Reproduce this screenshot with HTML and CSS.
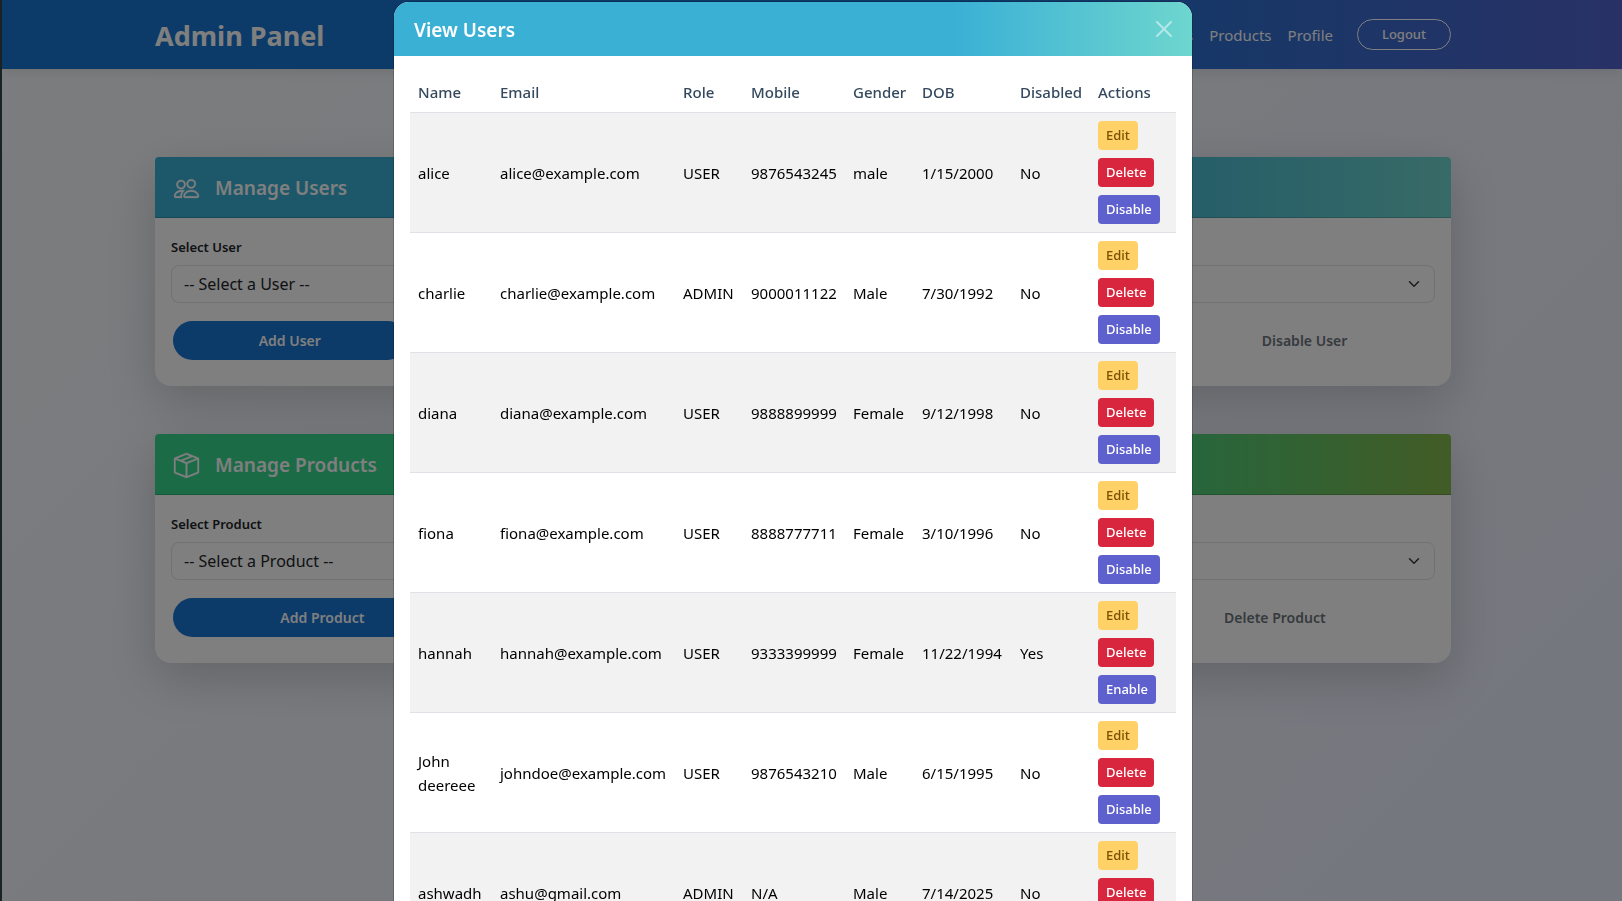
FILE: index.html
```html
<!DOCTYPE html>
<html lang="en">
<head>
<meta charset="utf-8">
<meta name="viewport" content="width=device-width, initial-scale=1">
<title>Admin Panel</title>
<link rel="stylesheet" href="styles.css">
</head>
<body>
<div class="app">
  <header class="navbar">
    <div class="container navbar-inner">
      <a class="brand" href="#">Admin Panel</a>
      <nav class="nav-links">
        <a href="#users">Users</a>
        <a href="#products">Products</a>
        <a href="#profile">Profile</a>
        <button class="logout" type="button">Logout</button>
      </nav>
    </div>
  </header>
  <main class="container content">
    <section class="card" id="users">
      <h2 class="card-head card-head-users">
        <svg class="card-icon" viewBox="0 0 16 16" aria-hidden="true"><path d="M15 14s1 0 1-1-1-4-5-4-5 3-5 4 1 1 1 1zm-7.978-1L7 12.996c.001-.264.167-1.03.76-1.72C8.312 10.629 9.282 10 11 10c1.717 0 2.687.63 3.24 1.276.593.69.758 1.457.76 1.72l-.008.002-.014.002zM11 7a2 2 0 1 0 0-4 2 2 0 0 0 0 4m3-2a3 3 0 1 1-6 0 3 3 0 0 1 6 0M6.936 9.28a6 6 0 0 0-1.23-.247A7 7 0 0 0 5 9c-4 0-5 3-5 4q0 1 1 1h4.216A2.24 2.24 0 0 1 5 13c0-1.01.377-2.042 1.09-2.904.243-.294.526-.569.846-.816M4.92 10A5.5 5.5 0 0 0 4 13H1c0-.26.164-1.03.76-1.724.545-.636 1.492-1.256 3.16-1.275ZM1.5 5.5a3 3 0 1 1 6 0 3 3 0 0 1-6 0m3-2a2 2 0 1 0 0 4 2 2 0 0 0 0-4"/></svg>
        Manage Users
      </h2>
      <div class="card-body">
        <label class="field-label" for="user-select">Select User</label>
        <div class="select-wrap">
          <select id="user-select"><option>-- Select a User --</option></select>
          <svg class="chevron" viewBox="0 0 16 16" aria-hidden="true"><path d="m2 5 6 6 6-6"/></svg>
        </div>
        <div class="pills">
          <button class="pill pill-active" type="button">Add User</button>
          <button class="pill" type="button">View Users</button>
          <button class="pill" type="button">Update User</button>
          <button class="pill" type="button">Delete User</button>
          <button class="pill" type="button">Disable User</button>
        </div>
      </div>
    </section>
    <section class="card" id="products">
      <h2 class="card-head card-head-products">
        <svg class="card-icon" viewBox="0 0 16 16" aria-hidden="true"><path d="M8.186 1.113a.5.5 0 0 0-.372 0L1.846 3.5l2.404.961L10.404 2zm3.564 1.426L5.596 5 8 5.961 14.154 3.5zm3.25 1.7-6.5 2.6v7.922l6.5-2.6V4.24zM7.5 14.762V6.838L1 4.239v7.923zM7.443.184a1.5 1.5 0 0 1 1.114 0l7.129 2.852A.5.5 0 0 1 16 3.5v8.662a1 1 0 0 1-.629.928l-7.185 2.874a.5.5 0 0 1-.372 0L.63 13.09a1 1 0 0 1-.63-.928V3.5a.5.5 0 0 1 .314-.464z"/></svg>
        Manage Products
      </h2>
      <div class="card-body">
        <label class="field-label" for="product-select">Select Product</label>
        <div class="select-wrap">
          <select id="product-select"><option>-- Select a Product --</option></select>
          <svg class="chevron" viewBox="0 0 16 16" aria-hidden="true"><path d="m2 5 6 6 6-6"/></svg>
        </div>
        <div class="pills">
          <button class="pill pill-active" type="button">Add Product</button>
          <button class="pill" type="button">View Products</button>
          <button class="pill" type="button">Update Product</button>
          <button class="pill" type="button">Delete Product</button>
        </div>
      </div>
    </section>
  </main>
</div>

<div class="backdrop">
  <div class="modal" role="dialog" aria-modal="true" aria-labelledby="modal-title">
    <div class="modal-head">
      <h1 class="modal-title" id="modal-title">View Users</h1>
      <button class="close" type="button" aria-label="Close">
        <svg viewBox="0 0 16 16" aria-hidden="true"><path d="M.293.293a1 1 0 0 1 1.414 0L8 6.586 14.293.293a1 1 0 1 1 1.414 1.414L9.414 8l6.293 6.293a1 1 0 0 1-1.414 1.414L8 9.414l-6.293 6.293a1 1 0 0 1-1.414-1.414L6.586 8 .293 1.707a1 1 0 0 1 0-1.414"/></svg>
      </button>
    </div>
    <div class="modal-body">
      <table class="users">
        <colgroup>
          <col class="c-name"><col class="c-email"><col class="c-role"><col class="c-mobile"><col class="c-gender"><col class="c-dob"><col class="c-disabled"><col class="c-actions">
        </colgroup>
        <thead>
          <tr><th>Name</th><th>Email</th><th>Role</th><th>Mobile</th><th>Gender</th><th>DOB</th><th>Disabled</th><th>Actions</th></tr>
        </thead>
        <tbody>
          <tr><td>alice</td><td>alice@example.com</td><td>USER</td><td>9876543245</td><td>male</td><td>1/15/2000</td><td>No</td>
            <td><div class="actions"><button class="btn edit" type="button">Edit</button><button class="btn delete" type="button">Delete</button><button class="btn toggle" type="button">Disable</button></div></td></tr>
          <tr><td>charlie</td><td>charlie@example.com</td><td>ADMIN</td><td>9000011122</td><td>Male</td><td>7/30/1992</td><td>No</td>
            <td><div class="actions"><button class="btn edit" type="button">Edit</button><button class="btn delete" type="button">Delete</button><button class="btn toggle" type="button">Disable</button></div></td></tr>
          <tr><td>diana</td><td>diana@example.com</td><td>USER</td><td>9888899999</td><td>Female</td><td>9/12/1998</td><td>No</td>
            <td><div class="actions"><button class="btn edit" type="button">Edit</button><button class="btn delete" type="button">Delete</button><button class="btn toggle" type="button">Disable</button></div></td></tr>
          <tr><td>fiona</td><td>fiona@example.com</td><td>USER</td><td>8888777711</td><td>Female</td><td>3/10/1996</td><td>No</td>
            <td><div class="actions"><button class="btn edit" type="button">Edit</button><button class="btn delete" type="button">Delete</button><button class="btn toggle" type="button">Disable</button></div></td></tr>
          <tr><td>hannah</td><td>hannah@example.com</td><td>USER</td><td>9333399999</td><td>Female</td><td>11/22/1994</td><td>Yes</td>
            <td><div class="actions"><button class="btn edit" type="button">Edit</button><button class="btn delete" type="button">Delete</button><button class="btn toggle" type="button">Enable</button></div></td></tr>
          <tr><td>John deereee</td><td>johndoe@example.com</td><td>USER</td><td>9876543210</td><td>Male</td><td>6/15/1995</td><td>No</td>
            <td><div class="actions"><button class="btn edit" type="button">Edit</button><button class="btn delete" type="button">Delete</button><button class="btn toggle" type="button">Disable</button></div></td></tr>
          <tr><td>ashwadh</td><td>ashu@gmail.com</td><td>ADMIN</td><td>N/A</td><td>Male</td><td>7/14/2025</td><td>No</td>
            <td><div class="actions"><button class="btn edit" type="button">Edit</button><button class="btn delete" type="button">Delete</button><button class="btn toggle" type="button">Disable</button></div></td></tr>
        </tbody>
      </table>
    </div>
  </div>
</div>
</body>
</html>
```
FILE: styles.css
```css
* { box-sizing: border-box; }

body {
  margin: 0;
  height: 100vh;
  overflow: hidden;
  font-family: "Segoe UI", "Noto Sans", "Open Sans", sans-serif;
  font-size: 15px;
  line-height: 24px;
  color: #212529;
}

button, select { font: inherit; color: inherit; cursor: pointer; }
button { background: none; border: 0; }
a { color: inherit; text-decoration: none; }

/* Page */
.app {
  min-height: 100vh;
  border-left: 2px solid #36484a;
  background: linear-gradient(135deg, #f8fafc 0%, #e9eefd 100%);
}

.container {
  width: 100%;
  max-width: 1320px;
  margin: 0 auto;
  padding: 0 12px;
}

.navbar {
  padding-right: 18px;
  background: linear-gradient(90deg, #1976d2 60%, #5263cc 100%);
  box-shadow: 0 2px 12px rgba(0, 0, 0, .1);
  color: #fff;
}
.navbar-inner {
  display: flex;
  align-items: center;
  justify-content: space-between;
  min-height: 69px;
}
.brand { padding-top: 2px; font-size: 27px; line-height: 42px; font-weight: 700; }
.nav-links { display: flex; align-items: center; gap: 16px; }
.logout {
  margin-left: 8px;
  padding: 4px 24px;
  border: 1px solid #fff;
  border-radius: 16px;
  font-size: 13px;
  line-height: 21px;
  font-weight: 500;
}

.content {
  max-width: 1338px;
  padding: 88px 30px 48px 12px;
  display: grid;
  gap: 48px;
}

.card {
  background: #fff;
  border-radius: 4px 4px 16px 16px;
  box-shadow: 0 16px 48px rgba(0, 0, 0, .175);
}
.card-head {
  display: flex;
  align-items: center;
  gap: 16px;
  margin: 0;
  padding: 17px 19px 15px;
  border-bottom: 1px solid rgba(0, 0, 0, .175);
  border-radius: 4px 4px 0 0;
  color: #fff;
  font-size: 19px;
  line-height: 28px;
  font-weight: 600;
}
.card-head-users { background: linear-gradient(90deg, #3ab0d5 70%, #70d6ce 100%); }
.card-head-products { background: linear-gradient(90deg, #36d68e 70%, #84b84c 100%); }
.card-icon { width: 25px; height: 25px; fill: currentColor; stroke: currentColor; stroke-width: .2; overflow: visible; }
.card-body { padding: 19px 16px 26px; }
.field-label { display: block; font-size: 13px; line-height: 21px; font-weight: 600; }

.select-wrap { display: grid; margin: 7px 0 18px; align-items: center; }
.select-wrap select, .chevron { grid-area: 1 / 1; }
.select-wrap select {
  appearance: none;
  width: 100%;
  height: 38px;
  padding: 6px 36px 6px 12px;
  border: 1px solid #dee2e6;
  border-radius: 8px;
  background: #fff;
  font-size: 16px;
}
.chevron {
  justify-self: end;
  width: 12px;
  height: 12px;
  margin-right: 15px;
  fill: none;
  stroke: #343a40;
  stroke-width: 2;
  stroke-linecap: round;
  stroke-linejoin: round;
  pointer-events: none;
}

.pills { display: flex; gap: 4px; padding: 0 2px; }
.pill {
  flex: 1 1 auto;
  padding: 8px 16px;
  border-radius: 20px;
  line-height: 23px;
  font-weight: 600;
  font-size: 14px;
  color: #6c757d;
}
.pill-active { background: #1976d2; color: #fff; }

/* Modal */
.backdrop {
  position: fixed;
  inset: 0;
  padding: 1px 38px 0 2px;
  overflow: hidden;
  background: rgba(0, 0, 0, .5);
}
.modal {
  max-width: 800px;
  margin: 0 auto;
  background: #fff;
  background-clip: padding-box;
  border: 1px solid rgba(0, 0, 0, .175);
  border-radius: 16px;
}
.modal-head {
  display: flex;
  align-items: center;
  justify-content: space-between;
  padding: 12px 20px;
  border-radius: 15px 15px 0 0;
  background: linear-gradient(90deg, #3ab0d5 70%, #6ed6cf 100%);
  color: #fff;
}
.modal-title { margin: 0; padding-top: 2px; font-size: 19px; line-height: 28px; font-weight: 600; }
.close { display: flex; padding: 0; opacity: .5; }
.close svg { width: 16px; height: 16px; fill: #fff; }
.modal-body { padding: 16px; }

.users { width: 100%; table-layout: fixed; border-collapse: separate; border-spacing: 0; color: #000; }
.c-name { width: 82px; }
.c-email { width: 183px; }
.c-role { width: 68px; }
.c-mobile { width: 102px; }
.c-gender { width: 69px; }
.c-dob { width: 98px; }
.c-disabled { width: 78px; }
.users th, .users td { padding: 8px; border-bottom: 1px solid #dee2e6; text-align: left; vertical-align: middle; }
.users th { color: #34495e; font-weight: 500; }
.users tbody tr:nth-child(odd) { background: #f2f2f2; }

.actions { display: flex; flex-direction: column; align-items: flex-start; gap: 8px; }
.btn { padding: 4px 8px; border-radius: 4px; font-size: 13px; line-height: 21px; font-weight: 500; color: #fff; }
.edit { background: #ffd166; color: #7a5200; }
.delete { background: #d7263d; }
.toggle { background: #5e60ce; }
```
